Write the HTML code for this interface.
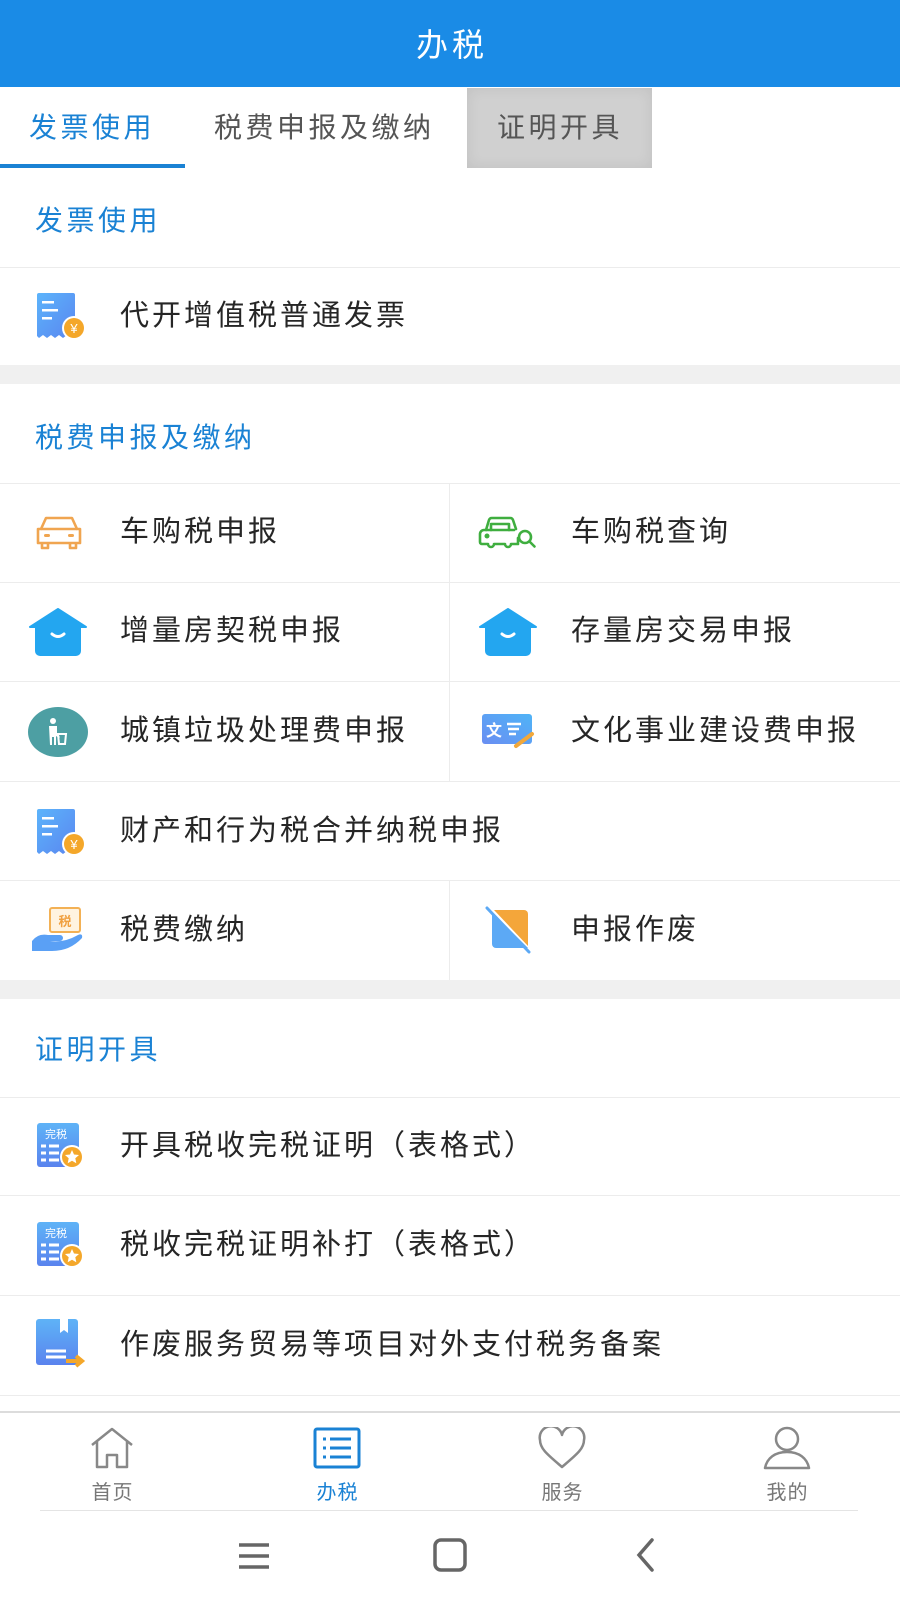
<!DOCTYPE html>
<html><head><meta charset="utf-8"><style>
*{margin:0;padding:0;box-sizing:border-box}
body{width:900px;height:1600px;background:#fff;position:relative;overflow:hidden;font-family:"Liberation Sans","Noto Sans CJK SC",sans-serif}
.a{position:absolute}
.hdr{left:0;top:0;width:900px;height:87px;background:#1a8be6;color:#fff;font-size:32px;text-align:center;line-height:90px;letter-spacing:4px;text-indent:4px}
.tab{top:88px;height:80px;line-height:80px;font-size:28px;letter-spacing:3.5px;color:#555}
.sec{left:35px;font-size:28px;letter-spacing:3.5px;color:#1a82d4}
.hl{left:0;width:900px;height:1px;background:#ececec}
.gap{left:0;width:900px;height:19px;background:#f0f0f0}
.t{font-size:29px;letter-spacing:3px;color:#262626;line-height:40px}
.vl{left:449px;width:1px;background:#ececec}
.nl{font-size:20px;color:#777;width:225px;text-align:center;top:1476px;letter-spacing:1px}
</style></head><body>
<div class="a hdr">办税</div>
<div class="a tab" style="left:29px;color:#1a82d4">发票使用</div>
<div class="a" style="left:0;top:164px;width:185px;height:4px;background:#1a82d4"></div>
<div class="a tab" style="left:214px">税费申报及缴纳</div>
<div class="a" style="left:467px;top:88px;width:185px;height:80px;background:#d0d0d0;box-shadow:inset 0 0 14px rgba(0,0,0,.08)"></div>
<div class="a tab" style="left:497px">证明开具</div>

<div class="a sec" style="top:199px">发票使用</div>
<div class="a hl" style="top:267px"></div>
<svg class="a" style="left:34px;top:290px" width="54" height="54" viewBox="0 0 54 54"><defs><linearGradient id="g1" x1="0" y1="0" x2="1" y2="1"><stop offset="0" stop-color="#5cb4fb"/><stop offset="1" stop-color="#5a86f0"/></linearGradient></defs><path d="M3 3h36a2 2 0 0 1 2 2v40l-4 3-4-3-4 3-4-3-4 3-4-3-4 3-4-3-4 3-2-2V5a2 2 0 0 1 2-2z" fill="url(#g1)"/><rect x="8" y="11" width="12" height="2.5" fill="#fff"/><rect x="8" y="19" width="16" height="2.5" fill="#fff"/><rect x="8" y="27" width="10" height="2.5" fill="#fff"/><circle cx="40" cy="38" r="12" fill="#fff"/><circle cx="40" cy="38" r="10" fill="#f4a72a"/><text x="40" y="43" font-size="13" fill="#fff" text-anchor="middle" font-family="Liberation Sans">¥</text></svg>
<div class="a t" style="left:120px;top:296px">代开增值税普通发票</div>
<div class="a gap" style="top:365px"></div>

<div class="a sec" style="top:416px">税费申报及缴纳</div>
<div class="a hl" style="top:483px"></div>
<div class="a hl" style="top:582px"></div>
<div class="a hl" style="top:681px"></div>
<div class="a hl" style="top:781px"></div>
<div class="a hl" style="top:880px"></div>
<div class="a vl" style="top:483px;height:298px"></div>
<div class="a vl" style="top:880px;height:100px"></div>

<svg class="a" style="left:34px;top:512px" width="50" height="40" viewBox="0 0 50 40"><g fill="none" stroke="#f0a550" stroke-width="2.6" stroke-linejoin="round"><path d="M12 6h26l5 11h3v14H4V17h3z"/><path d="M7 17h36"/><path d="M8 31v5h6v-5M36 31v5h6v-5"/></g><rect x="10" y="22" width="6" height="3" rx="1.5" fill="#f0a550"/><rect x="34" y="22" width="6" height="3" rx="1.5" fill="#f0a550"/></svg>
<div class="a t" style="left:120px;top:512px">车购税申报</div>
<svg class="a" style="left:478px;top:514px" width="62" height="40" viewBox="0 0 62 40"><g fill="none" stroke="#3fae3f" stroke-width="2.6" stroke-linejoin="round" stroke-linecap="round"><path d="M8 16l3-10a3 3 0 0 1 3-2h18a3 3 0 0 1 3 2l3 9"/><path d="M40 24V30H33a3 3 0 0 1-6 0H16a3 3 0 0 1-6 0H4a2 2 0 0 1-2-2v-8a4 4 0 0 1 4-4h30"/><path d="M13 16v-6h18v6"/><circle cx="47" cy="23" r="6"/><path d="M51.5 27.5l5 5"/></g><circle cx="9" cy="22" r="2.5" fill="#3fae3f"/></svg>
<div class="a t" style="left:571px;top:512px">车购税查询</div>

<svg class="a" style="left:28px;top:607px" width="60" height="50" viewBox="0 0 60 50"><path d="M30 2L2 20h6v24a4 4 0 0 0 4 4h36a4 4 0 0 0 4-4V20h6z" fill="#23a6f0" stroke="#23a6f0" stroke-width="2" stroke-linejoin="round"/><path d="M24 27q6 5 12 0" fill="none" stroke="#fff" stroke-width="3" stroke-linecap="round"/></svg>
<div class="a t" style="left:120px;top:611px">增量房契税申报</div>
<svg class="a" style="left:478px;top:607px" width="60" height="50" viewBox="0 0 60 50"><path d="M30 2L2 20h6v24a4 4 0 0 0 4 4h36a4 4 0 0 0 4-4V20h6z" fill="#23a6f0" stroke="#23a6f0" stroke-width="2" stroke-linejoin="round"/><path d="M24 27q6 5 12 0" fill="none" stroke="#fff" stroke-width="3" stroke-linecap="round"/></svg>
<div class="a t" style="left:571px;top:611px">存量房交易申报</div>

<svg class="a" style="left:27px;top:706px" width="62" height="52" viewBox="0 0 62 52"><ellipse cx="31" cy="26" rx="30" ry="25" fill="#4d9fa3"/><circle cx="26" cy="15" r="3" fill="#fff"/><path d="M22 20h8v8l3 3-1 1-3-2v9h-2v-8h-2v8h-2z" fill="#fff"/><path d="M31 28h8l-1 10h-6z" fill="none" stroke="#fff" stroke-width="2"/></svg>
<div class="a t" style="left:120px;top:711px">城镇垃圾处理费申报</div>
<svg class="a" style="left:480px;top:712px" width="58" height="40" viewBox="0 0 58 40"><defs><linearGradient id="g2" x1="0" y1="1" x2="1" y2="0"><stop offset="0" stop-color="#6a8ef2"/><stop offset="1" stop-color="#4fb4f7"/></linearGradient></defs><rect x="2" y="2" width="50" height="30" rx="3" fill="url(#g2)"/><text x="14" y="24" font-size="16" fill="#fff" text-anchor="middle" font-family="Noto Sans CJK SC" font-weight="bold">文</text><path d="M27 12h14M28 17h11M29 22h7" stroke="#fff" stroke-width="2.4"/><path d="M36 34l16-12" stroke="#f2a83a" stroke-width="4" stroke-linecap="round"/></svg>
<div class="a t" style="left:571px;top:711px">文化事业建设费申报</div>

<svg class="a" style="left:34px;top:806px" width="54" height="54" viewBox="0 0 54 54"><path d="M3 3h36a2 2 0 0 1 2 2v40l-4 3-4-3-4 3-4-3-4 3-4-3-4 3-4-3-4 3-2-2V5a2 2 0 0 1 2-2z" fill="url(#g1)"/><rect x="8" y="11" width="12" height="2.5" fill="#fff"/><rect x="8" y="19" width="16" height="2.5" fill="#fff"/><rect x="8" y="27" width="10" height="2.5" fill="#fff"/><circle cx="40" cy="38" r="12" fill="#fff"/><circle cx="40" cy="38" r="10" fill="#f4a72a"/><text x="40" y="43" font-size="13" fill="#fff" text-anchor="middle" font-family="Liberation Sans">¥</text></svg>
<div class="a t" style="left:120px;top:811px">财产和行为税合并纳税申报</div>

<svg class="a" style="left:30px;top:905px" width="58" height="50" viewBox="0 0 58 50"><rect x="20" y="3" width="30" height="24" rx="2" fill="#fff3e0" stroke="#f3b155" stroke-width="2"/><text x="35" y="21" font-size="13" fill="#f0a040" text-anchor="middle" font-family="Noto Sans CJK SC" font-weight="bold">税</text><path d="M2 36q6-8 16-6h12a3 3 0 0 1 0 6H20q14 2 28-6q5-2 4 3Q40 46 22 46H2z" fill="#5aa0f5"/></svg>
<div class="a t" style="left:120px;top:910px">税费缴纳</div>
<svg class="a" style="left:484px;top:906px" width="50" height="48" viewBox="0 0 50 48"><path d="M10 4h30a4 4 0 0 1 4 4v32z" fill="#f4a63a"/><path d="M8 6l36 36H12a4 4 0 0 1-4-4z" fill="#5ca9f5"/><path d="M3 2l42 44" stroke="#5ca9f5" stroke-width="3" stroke-linecap="round"/></svg>
<div class="a t" style="left:571px;top:910px">申报作废</div>

<div class="a gap" style="top:980px"></div>
<div class="a sec" style="top:1028px">证明开具</div>
<div class="a hl" style="top:1097px"></div>
<div class="a hl" style="top:1195px"></div>
<div class="a hl" style="top:1295px"></div>
<div class="a hl" style="top:1395px"></div>

<svg class="a" style="left:36px;top:1122px" width="50" height="50" viewBox="0 0 50 50"><defs><linearGradient id="g3" x1="0" y1="0" x2="0" y2="1"><stop offset="0" stop-color="#5eb3f7"/><stop offset="1" stop-color="#5a83ee"/></linearGradient></defs><rect x="1" y="1" width="42" height="44" rx="3" fill="url(#g3)"/><text x="20" y="16" font-size="11" fill="#fff" text-anchor="middle" font-family="Noto Sans CJK SC">完税</text><path d="M5 24h5M13 24h10M5 31h5M13 31h10M5 38h5M13 38h10" stroke="#fff" stroke-width="3"/><circle cx="36" cy="35" r="12" fill="#fff"/><circle cx="36" cy="35" r="10" fill="#f4a72a"/><path d="M36 28l2 4.5 5 .5-3.7 3.3 1 5-4.3-2.5-4.3 2.5 1-5L29 33l5-.5z" fill="#fff"/></svg>
<div class="a t" style="left:120px;top:1126px">开具税收完税证明（表格式）</div>
<svg class="a" style="left:36px;top:1221px" width="50" height="50" viewBox="0 0 50 50"><rect x="1" y="1" width="42" height="44" rx="3" fill="url(#g3)"/><text x="20" y="16" font-size="11" fill="#fff" text-anchor="middle" font-family="Noto Sans CJK SC">完税</text><path d="M5 24h5M13 24h10M5 31h5M13 31h10M5 38h5M13 38h10" stroke="#fff" stroke-width="3"/><circle cx="36" cy="35" r="12" fill="#fff"/><circle cx="36" cy="35" r="10" fill="#f4a72a"/><path d="M36 28l2 4.5 5 .5-3.7 3.3 1 5-4.3-2.5-4.3 2.5 1-5L29 33l5-.5z" fill="#fff"/></svg>
<div class="a t" style="left:120px;top:1225px">税收完税证明补打（表格式）</div>
<svg class="a" style="left:36px;top:1318px" width="52" height="52" viewBox="0 0 52 52"><rect x="0" y="1" width="42" height="46" rx="3" fill="url(#g3)"/><path d="M24 1h8v14l-4-3-4 3z" fill="#fff"/><path d="M10 33h20M10 39h20" stroke="#fff" stroke-width="3"/><path d="M30 43h14M40 38l6 5-6 5" fill="none" stroke="#f4a72a" stroke-width="4"/></svg>
<div class="a t" style="left:120px;top:1325px">作废服务贸易等项目对外支付税务备案</div>

<div class="a" style="left:0;top:1411px;width:900px;height:2px;background:#dcdcdc"></div>
<svg class="a" style="left:89px;top:1427px" width="46" height="42" viewBox="0 0 46 42"><path d="M3 18L23 2l20 16M8 14v26h10V28h10v12h10V14" fill="none" stroke="#888" stroke-width="2.5" stroke-linejoin="round"/></svg>
<svg class="a" style="left:313px;top:1427px" width="48" height="42" viewBox="0 0 48 42"><rect x="2" y="2" width="44" height="38" rx="2" fill="none" stroke="#1a82d4" stroke-width="3"/><path d="M10 12h3M17 12h21M10 21h3M17 21h21M10 30h3M17 30h21" stroke="#1a82d4" stroke-width="3"/></svg>
<svg class="a" style="left:538px;top:1427px" width="48" height="42" viewBox="0 0 48 42"><path d="M24 40C10 28 2 22 2 13A10 10 0 0 1 24 8A10 10 0 0 1 46 13C46 22 38 28 24 40z" fill="none" stroke="#888" stroke-width="2.5" stroke-linejoin="round"/></svg>
<svg class="a" style="left:763px;top:1426px" width="48" height="44" viewBox="0 0 48 44"><circle cx="24" cy="13" r="11" fill="none" stroke="#888" stroke-width="2.5"/><path d="M2 42c2-10 10-16 22-16s20 6 22 16z" fill="none" stroke="#888" stroke-width="2.5" stroke-linejoin="round"/></svg>
<div class="a nl" style="left:0">首页</div>
<div class="a nl" style="left:225px;color:#1a82d4">办税</div>
<div class="a nl" style="left:450px">服务</div>
<div class="a nl" style="left:675px">我的</div>
<div class="a" style="left:40px;top:1510px;width:818px;height:1px;background:#e4e4e4"></div>

<svg class="a" style="left:237px;top:1542px" width="34" height="28" viewBox="0 0 34 28"><path d="M2 3h30M2 14h30M2 25h30" stroke="#666" stroke-width="3.5"/></svg>
<svg class="a" style="left:433px;top:1538px" width="34" height="34" viewBox="0 0 34 34"><rect x="2" y="2" width="30" height="30" rx="6" fill="none" stroke="#666" stroke-width="3.5"/></svg>
<svg class="a" style="left:634px;top:1537px" width="24" height="36" viewBox="0 0 24 36"><path d="M18 3L5 18l13 15" fill="none" stroke="#666" stroke-width="3.5" stroke-linecap="round"/></svg>
</body></html>
